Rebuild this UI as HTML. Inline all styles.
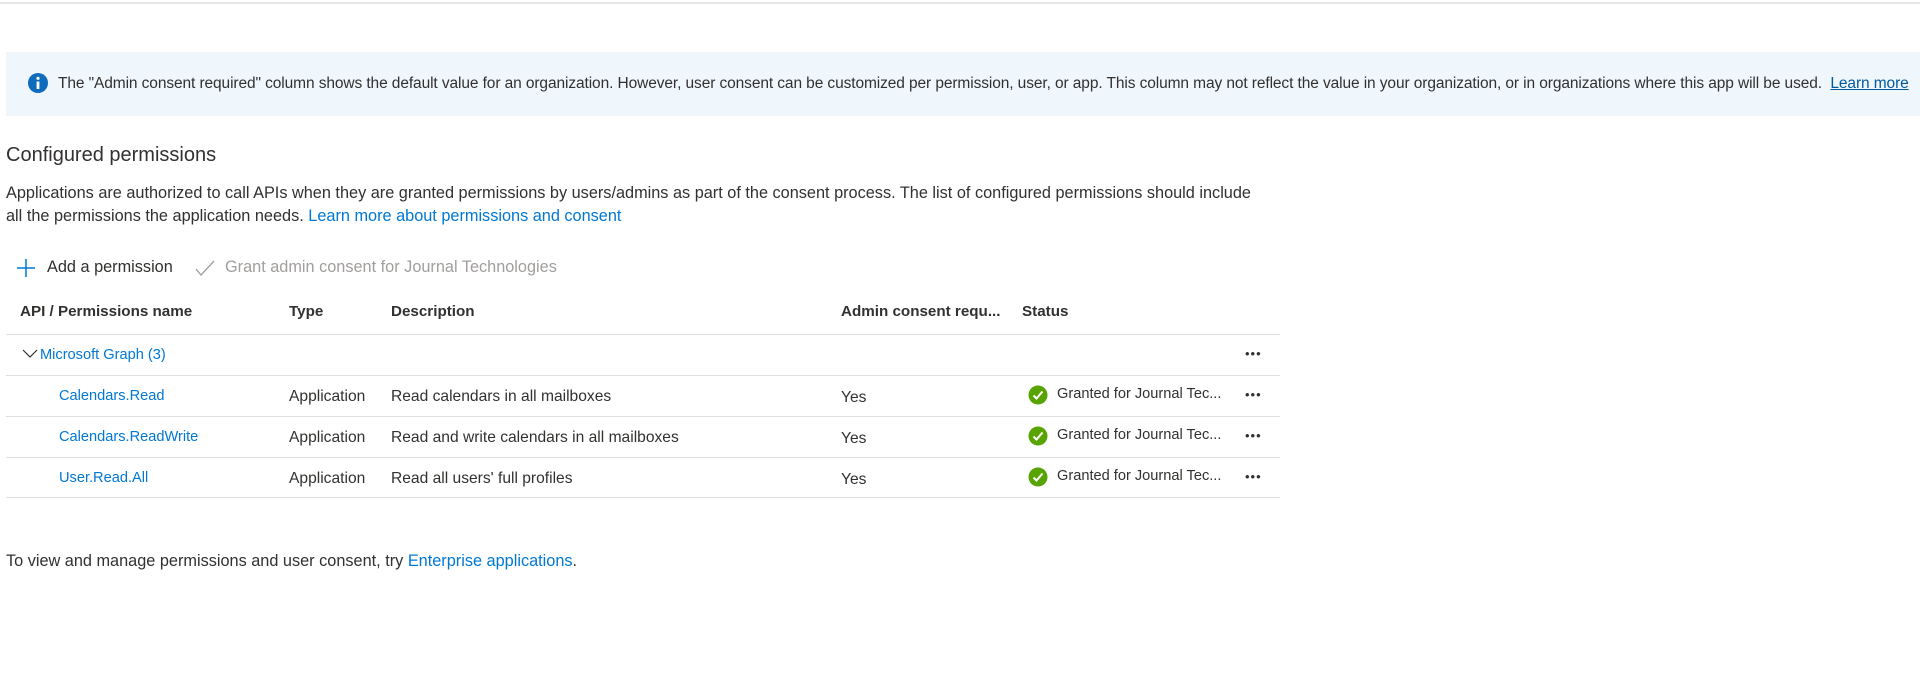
<!DOCTYPE html>
<html><head><meta charset="utf-8"><style>
body{margin:0;width:1920px;height:677px;background:#fff;font-family:"Liberation Sans",sans-serif;color:#323130;position:relative;overflow:hidden}
.a{position:absolute;white-space:nowrap}
.link{color:#0078d4}
.line{position:absolute;left:6px;width:1274px;height:1px;background:#e1dfdd}
.t{font-size:15.6px}
.h{font-size:15.2px;font-weight:bold;color:#323130}
</style></head><body>
<div style="position:absolute;left:0;top:2px;width:1920px;height:2px;background:#e6e6e6"></div>
<div style="position:absolute;left:6px;top:52px;width:1914px;height:64px;background:#eff6fc"></div>
<svg class="a" style="left:28px;top:73px" width="20" height="20" viewBox="0 0 20 20"><circle cx="10" cy="10" r="10" fill="#0f6cbd"/><rect x="8.6" y="8.5" width="2.8" height="7.5" fill="#fff"/><circle cx="10" cy="5.3" r="1.6" fill="#fff"/></svg>
<div class="a" style="left:58px;top:75px;font-size:15.5px;letter-spacing:-0.1px">The "Admin consent required" column shows the default value for an organization. However, user consent can be customized per permission, user, or app. This column may not reflect the value in your organization, or in organizations where this app will be used.&nbsp; <span style="color:#005a9e;text-decoration:underline">Learn more</span></div>
<div class="a" style="left:6px;top:144px;font-size:20px">Configured permissions</div>
<div class="a" style="left:6px;top:182px;font-size:16.3px;line-height:23px;white-space:normal;width:1255px">Applications are authorized to call APIs when they are granted permissions by users/admins as part of the consent process. The list of configured permissions should include all the permissions the application needs. <span class="link">Learn more about permissions and consent</span></div>
<svg class="a" style="left:16px;top:258px" width="20" height="20"><path d="M10 1V19M1 10H19" stroke="#0078d4" stroke-width="1.5"/></svg>
<div class="a" style="left:47px;top:258px;font-size:16.3px">Add a permission</div>
<svg class="a" style="left:195px;top:259px" width="20" height="18"><path d="M1 10L6 16L19 2" stroke="#a19f9d" stroke-width="1.3" fill="none"/></svg>
<div class="a" style="left:225px;top:258px;font-size:16.3px;color:#a19f9d">Grant admin consent for Journal Technologies</div>
<div class="a h" style="left:20px;top:303px">API / Permissions name</div>
<div class="a h" style="left:289px;top:303px">Type</div>
<div class="a h" style="left:391px;top:303px">Description</div>
<div class="a h" style="left:841px;top:303px">Admin consent requ...</div>
<div class="a h" style="left:1022px;top:303px">Status</div>
<div class="line" style="top:334px"></div>
<div class="line" style="top:375px"></div>
<div class="line" style="top:416px"></div>
<div class="line" style="top:457px"></div>
<div class="line" style="top:497px"></div>
<svg class="a" style="left:22px;top:349px" width="16" height="10"><path d="M1 1L8 8L15 1" stroke="#323130" stroke-width="1.2" fill="none"/></svg>
<div class="a link" style="left:40px;top:347px;font-size:14.6px">Microsoft Graph (3)</div>
<div class="a" style="left:1245px;top:346px;font-size:13px;letter-spacing:1px">•••</div>
<div class="a link" style="left:59px;top:388px;font-size:14.6px">Calendars.Read</div>
<div class="a link" style="left:59px;top:429px;font-size:14.6px">Calendars.ReadWrite</div>
<div class="a link" style="left:59px;top:470px;font-size:14.6px">User.Read.All</div>
<div class="a t" style="left:289px;top:388px">Application</div>
<div class="a t" style="left:289px;top:429px">Application</div>
<div class="a t" style="left:289px;top:470px">Application</div>
<div class="a t" style="left:391px;top:388px">Read calendars in all mailboxes</div>
<div class="a t" style="left:391px;top:429px">Read and write calendars in all mailboxes</div>
<div class="a t" style="left:391px;top:470px">Read all users' full profiles</div>
<div class="a t" style="left:841px;top:389px">Yes</div>
<div class="a t" style="left:841px;top:430px">Yes</div>
<div class="a t" style="left:841px;top:471px">Yes</div>
<svg class="a" style="left:1028px;top:385px" width="20" height="20" viewBox="0 0 20 20"><circle cx="10" cy="10" r="9.5" fill="#57a300"/><path d="M5.5 10.5L8.5 13.5L14.5 6.5" stroke="#fff" stroke-width="2" fill="none"/></svg>
<svg class="a" style="left:1028px;top:426px" width="20" height="20" viewBox="0 0 20 20"><circle cx="10" cy="10" r="9.5" fill="#57a300"/><path d="M5.5 10.5L8.5 13.5L14.5 6.5" stroke="#fff" stroke-width="2" fill="none"/></svg>
<svg class="a" style="left:1028px;top:467px" width="20" height="20" viewBox="0 0 20 20"><circle cx="10" cy="10" r="9.5" fill="#57a300"/><path d="M5.5 10.5L8.5 13.5L14.5 6.5" stroke="#fff" stroke-width="2" fill="none"/></svg>
<div class="a" style="left:1057px;top:386px;font-size:14.6px">Granted for Journal Tec...</div>
<div class="a" style="left:1057px;top:427px;font-size:14.6px">Granted for Journal Tec...</div>
<div class="a" style="left:1057px;top:468px;font-size:14.6px">Granted for Journal Tec...</div>
<div class="a" style="left:1245px;top:387px;font-size:13px;letter-spacing:1px">•••</div>
<div class="a" style="left:1245px;top:428px;font-size:13px;letter-spacing:1px">•••</div>
<div class="a" style="left:1245px;top:469px;font-size:13px;letter-spacing:1px">•••</div>
<div class="a" style="left:6px;top:552px;font-size:16.3px">To view and manage permissions and user consent, try <span class="link">Enterprise applications</span>.</div>
</body></html>
